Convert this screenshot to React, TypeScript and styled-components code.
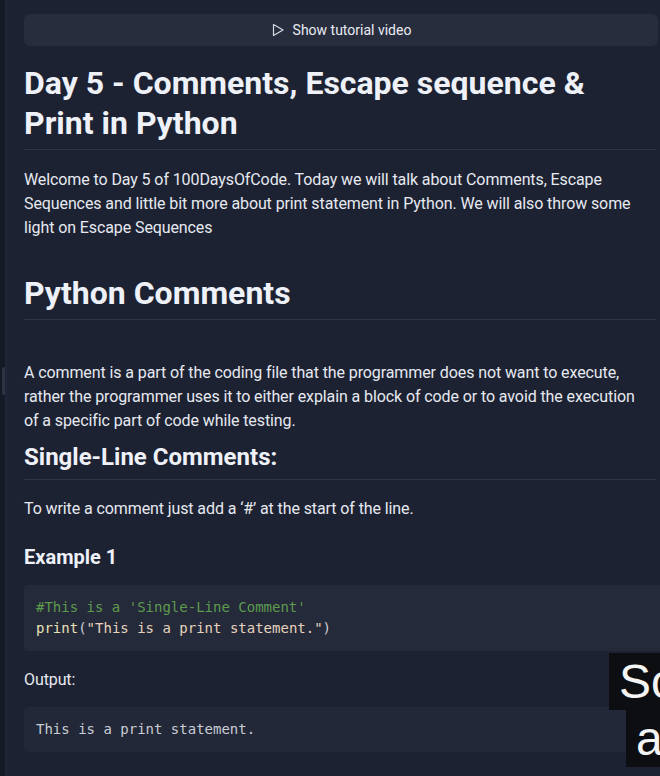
import React from "react";
import styled, { createGlobalStyle } from "styled-components";

const GlobalStyle = createGlobalStyle`
  html, body {
    margin: 0;
    padding: 0;
    background: #1d2232;
    overflow: hidden;
  }
  body {
    font-family: Roboto, "Noto Sans", sans-serif;
    color: #e4e7ee;
  }
`;

const Page = styled.div`
  position: relative;
  display: flex;
  width: 660px;
  height: 776px;
  overflow: hidden;
  background: #1d2232;
`;

const Rail = styled.div`
  position: relative;
  flex: 0 0 5px;
  background: #151a27;
  border-right: 2px solid #202638;
`;

const ScrollThumb = styled.div`
  position: absolute;
  left: 2px;
  top: 367px;
  width: 3px;
  height: 28px;
  border-radius: 2px;
  background: #2d3344;
`;

const Content = styled.main`
  flex: 1;
  display: flex;
  flex-direction: column;
  padding: 14px 0 0 17px;
  min-width: 0;
`;

const VideoButton = styled.button`
  display: flex;
  align-items: center;
  justify-content: center;
  gap: 8px;
  width: 634px;
  height: 32px;
  border: none;
  border-radius: 6px;
  background: #282d3e;
  color: #e8ebf2;
  font-family: Roboto, sans-serif;
  font-size: 14px;
  cursor: pointer;
`;

const Heading = styled.h1<{ $size: number; $line: number; $top: number; $rule?: boolean }>`
  margin: ${(p) => p.$top}px 0 0;
  padding-bottom: ${(p) => (p.$rule ? 6 : 0)}px;
  font-size: ${(p) => p.$size}px;
  line-height: ${(p) => p.$line}px;
  font-weight: 700;
  color: #eef1f8;
  border-bottom: ${(p) => (p.$rule ? "1px solid #2e3446" : "none")};
  width: 632px;
`;

const Para = styled.p<{ $top: number }>`
  margin: ${(p) => p.$top}px 0 0;
  font-size: 16px;
  line-height: 24px;
  color: #e6e9f0;
  width: 643px;
  letter-spacing: -0.1px;
  white-space: nowrap;
`;

const CodeBlock = styled.pre<{ $top: number; $bg: string }>`
  margin: ${(p) => p.$top}px 0 0;
  padding: 12px 12px;
  width: 660px;
  box-sizing: border-box;
  background: ${(p) => p.$bg};
  border-radius: 4px;
  font-family: "DejaVu Sans Mono", monospace;
  font-size: 14px;
  line-height: 21px;
  color: #c9ccd4;
`;

const Comment = styled.span`
  color: #5e9a4c;
`;

const Fn = styled.span`
  color: #e8e2b4;
`;

const Str = styled.span`
  color: #e6d2bc;
`;

const Caption = styled.div`
  position: absolute;
  right: 0;
  top: 653px;
  display: flex;
  flex-direction: column;
  align-items: flex-end;
  font-family: "Liberation Sans", Arial, sans-serif;
  font-size: 48px;
  line-height: 57px;
  color: #f4f4f4;
`;

const CaptionLine = styled.span<{ $w: number }>`
  display: block;
  width: ${(p) => p.$w}px;
  padding-left: 10px;
  box-sizing: border-box;
  background: #0d0e11;
  white-space: nowrap;
  overflow: hidden;
`;

function PlayIcon() {
  return (
    <svg width="14" height="14" viewBox="0 0 14 14" fill="none">
      <path d="M2.5 1.5 L12 7 L2.5 12.5 Z" stroke="#d8dbe3" strokeWidth="1.2" strokeLinejoin="round" />
    </svg>
  );
}

export default function App() {
  return (
    <>
      <GlobalStyle />
      <Page>
        <Rail>
          <ScrollThumb />
        </Rail>
        <Content>
          <VideoButton>
            <PlayIcon />
            Show tutorial video
          </VideoButton>

          <Heading as="h1" $size={32} $line={40} $top={17} $rule>
            Day 5 - Comments, Escape sequence &amp; Print in Python
          </Heading>

          <Para $top={18}>
            Welcome to Day 5 of 100DaysOfCode. Today we will talk about Comments, Escape
            <br />
            Sequences and little bit more about print statement in Python. We will also throw some
            <br />
            light on Escape Sequences
          </Para>

          <Heading as="h2" $size={32} $line={40} $top={33} $rule>
            Python Comments
          </Heading>

          <Para $top={41}>
            A comment is a part of the coding file that the programmer does not want to execute,
            <br />
            rather the programmer uses it to either explain a block of code or to avoid the execution
            <br />
            of a specific part of code while testing.
          </Para>

          <Heading as="h3" $size={24} $line={32} $top={8} $rule>
            Single-Line Comments:
          </Heading>

          <Para $top={17}>To write a comment just add a ‘#’ at the start of the line.</Para>

          <Heading as="h4" $size={20} $line={28} $top={22}>
            Example 1
          </Heading>

          <CodeBlock $top={14} $bg="#252a3b">
            <Comment>#This is a 'Single-Line Comment'</Comment>
            {"\n"}
            <Fn>print</Fn>(<Str>"This is a print statement."</Str>)
          </CodeBlock>

          <Para $top={17}>Output:</Para>

          <CodeBlock $top={15} $bg="#232838">This is a print statement.</CodeBlock>
        </Content>
        <Caption>
          <CaptionLine $w={51}>So</CaptionLine>
          <CaptionLine $w={34}>a</CaptionLine>
        </Caption>
      </Page>
    </>
  );
}
